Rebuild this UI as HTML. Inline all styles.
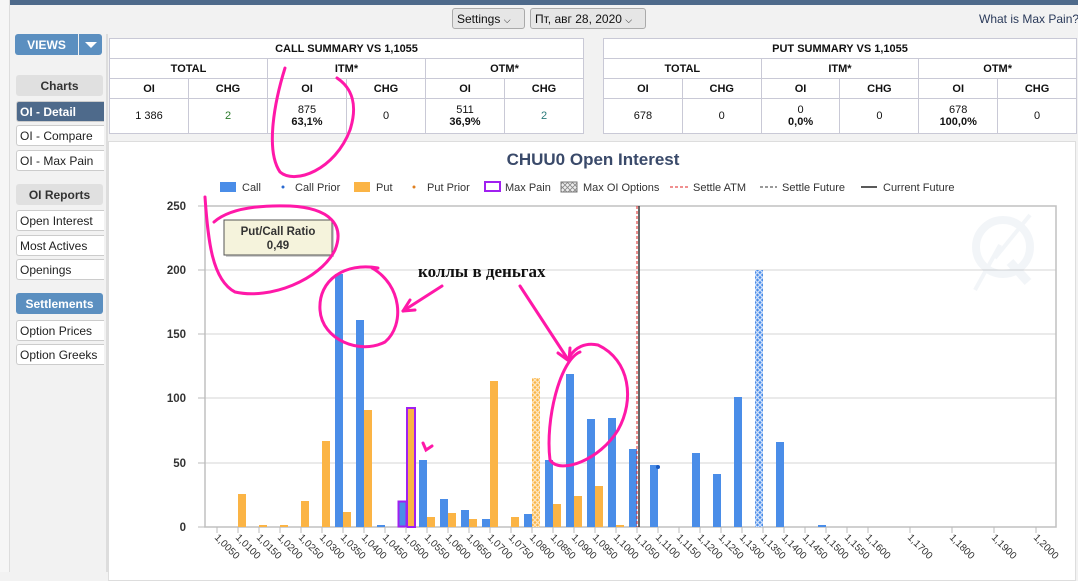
<!DOCTYPE html>
<html><head><meta charset="utf-8"><style>
*{box-sizing:border-box;margin:0;padding:0}
body{width:1078px;height:572px;overflow:hidden;background:#f2f2f2;font-family:"Liberation Sans",sans-serif;position:relative;font-size:12px;color:#111}
.abs{position:absolute;white-space:nowrap}
.btn{position:absolute;white-space:nowrap;border:1px solid #aaa;border-radius:3px;background:#e6e6e6;font-size:12px;padding:3px 4px;height:21px}
table{border-collapse:collapse;background:#fff;position:absolute;table-layout:fixed}
td{border:1px solid #c9c9d6;text-align:center;font-size:11px;height:20px;padding:0}
.h td,td.h{font-weight:bold}
.side{position:absolute;left:16px;width:88px;height:21px;border:1px solid #ccc;border-right:none;border-radius:3px 0 0 3px;background:#fff;font-size:12px;padding:3px 0 0 3px;color:#222;white-space:nowrap}
.hd{position:absolute;left:16px;width:87px;height:21px;border-radius:3px;background:#e0e0e0;font-weight:bold;font-size:12px;text-align:center;padding-top:4px;color:#333}
</style></head><body>
<div class="abs" style="left:0;top:0;width:10px;height:572px;background:#f6f6f6;border-right:1px solid #ddd"></div>
<div class="abs" style="left:10px;top:0;width:1068px;height:5px;background:#4e6a8b"></div>
<div class="btn" style="left:452px;top:8px;width:73px">Settings <span style="font-size:9px">&#9013;</span></div>
<div class="btn" style="left:530px;top:8px;width:116px">Пт, авг 28, 2020 <span style="font-size:9px">&#9013;</span></div>
<div class="abs" style="left:979px;top:12px;font-size:12px;color:#2a3a5a">What is Max Pain?</div>

<div class="abs" style="left:15px;top:34px;width:63px;height:21px;background:#5b8fc0;border-radius:3px 0 0 3px;color:#fff;font-weight:bold;font-size:12px;text-align:center;padding-top:4px">VIEWS</div>
<div class="abs" style="left:79px;top:34px;width:23px;height:21px;background:#5b8fc0;border-radius:0 3px 3px 0"><div style="margin:8px auto 0;width:0;height:0;border-left:6px solid transparent;border-right:6px solid transparent;border-top:6px solid #fff"></div></div>
<div class="abs" style="left:106px;top:34px;width:2px;height:538px;background:#ddd"></div>

<div class="hd" style="top:75px">Charts</div>
<div class="side" style="top:101px;background:#4e6a8b;color:#fff;font-weight:bold">OI - Detail</div>
<div class="side" style="top:125px">OI - Compare</div>
<div class="side" style="top:150px">OI - Max Pain</div>
<div class="hd" style="top:184px">OI Reports</div>
<div class="side" style="top:210px">Open Interest</div>
<div class="side" style="top:235px">Most Actives</div>
<div class="side" style="top:259px">Openings</div>
<div class="hd" style="top:293px;background:#5b8fc0;color:#fff">Settlements</div>
<div class="side" style="top:320px">Option Prices</div>
<div class="side" style="top:344px">Option Greeks</div>

<table style="left:109px;top:38px;width:475px">
<tr class="h"><td colspan="6">CALL SUMMARY VS 1,1055</td></tr>
<tr class="h"><td colspan="2">TOTAL</td><td colspan="2">ITM*</td><td colspan="2">OTM*</td></tr>
<tr class="h"><td>OI</td><td>CHG</td><td>OI</td><td>CHG</td><td>OI</td><td>CHG</td></tr>
<tr style="height:35px"><td>1 386</td><td style="color:#2a7a2a">2</td><td>875<br><b>63,1%</b></td><td>0</td><td>511<br><b>36,9%</b></td><td style="color:#2a7a7a">2</td></tr>
</table>
<table style="left:603px;top:38px;width:474px">
<tr class="h"><td colspan="6">PUT SUMMARY VS 1,1055</td></tr>
<tr class="h"><td colspan="2">TOTAL</td><td colspan="2">ITM*</td><td colspan="2">OTM*</td></tr>
<tr class="h"><td>OI</td><td>CHG</td><td>OI</td><td>CHG</td><td>OI</td><td>CHG</td></tr>
<tr style="height:35px"><td>678</td><td>0</td><td>0<br><b>0,0%</b></td><td>0</td><td>678<br><b>100,0%</b></td><td>0</td></tr>
</table>

<div class="abs" style="left:108px;top:141px;width:968px;height:440px;background:#fff;border:1px solid #ddd"></div>

<svg class="abs" style="left:0;top:0" width="1078" height="572" font-family="Liberation Sans, sans-serif">
<defs>
<pattern id="hb" width="5" height="5" patternUnits="userSpaceOnUse"><rect width="5" height="5" fill="#4a8de8"/><path d="M0,0L5,5M5,0L0,5" stroke="#cfe0fa" stroke-width="1.3"/></pattern>
<pattern id="ho" width="5" height="5" patternUnits="userSpaceOnUse"><rect width="5" height="5" fill="#fbb445"/><path d="M0,0L5,5M5,0L0,5" stroke="#fde6c0" stroke-width="1.3"/></pattern>
<pattern id="hg" width="5" height="5" patternUnits="userSpaceOnUse"><rect width="5" height="5" fill="#eee"/><path d="M0,0L5,5M5,0L0,5" stroke="#888" stroke-width="0.8"/></pattern>
</defs>
<text x="593" y="165" text-anchor="middle" font-size="17" font-weight="bold" fill="#3a4a6a">CHUU0 Open Interest</text>
<g font-size="11" fill="#333">
<rect x="220" y="182" width="16" height="10" fill="#4a8de8"/><text x="242" y="191">Call</text>
<circle cx="283" cy="187" r="1.5" fill="#2a6ad0"/><text x="295" y="191">Call Prior</text>
<rect x="354" y="182" width="16" height="10" fill="#fbb445"/><text x="376" y="191">Put</text>
<circle cx="414" cy="187" r="1.5" fill="#e08020"/><text x="427" y="191">Put Prior</text>
<rect x="485" y="182" width="15" height="9" fill="none" stroke="#a020f0" stroke-width="2"/><text x="505" y="191">Max Pain</text>
<rect x="561" y="182" width="16" height="10" fill="url(#hg)" stroke="#777"/><text x="583" y="191">Max OI Options</text>
<line x1="670" y1="187" x2="690" y2="187" stroke="#e02020" stroke-dasharray="3,2"/><text x="693" y="191">Settle ATM</text>
<line x1="760" y1="187" x2="777" y2="187" stroke="#333" stroke-dasharray="3,2"/><text x="782" y="191">Settle Future</text>
<line x1="861" y1="187" x2="877" y2="187" stroke="#222" stroke-width="1.5"/><text x="883" y="191">Current Future</text>
</g>
<g stroke="#e4e4e4" stroke-width="1.5"><line x1="205" y1="270" x2="1056" y2="270"/><line x1="205" y1="334" x2="1056" y2="334"/><line x1="205" y1="398" x2="1056" y2="398"/><line x1="205" y1="463" x2="1056" y2="463"/></g>
<rect x="205" y="206" width="851" height="321" fill="none" stroke="#c0c0c0" stroke-width="1.5"/>
<line x1="198" y1="206" x2="205" y2="206" stroke="#bbb"/><line x1="198" y1="270" x2="205" y2="270" stroke="#bbb"/><line x1="198" y1="334" x2="205" y2="334" stroke="#bbb"/><line x1="198" y1="398" x2="205" y2="398" stroke="#bbb"/><line x1="198" y1="463" x2="205" y2="463" stroke="#bbb"/><line x1="198" y1="527" x2="205" y2="527" stroke="#bbb"/>
<g font-size="11.5" font-weight="bold" fill="#333" text-anchor="end"><text x="186" y="210">250</text><text x="186" y="274">200</text><text x="186" y="338">150</text><text x="186" y="402">100</text><text x="186" y="467">50</text><text x="186" y="531">0</text></g>
<g opacity="0.08" stroke="#6a8ab0" fill="none"><circle cx="1003" cy="247" r="27" stroke-width="8"/><line x1="1010" y1="262" x2="1028" y2="282" stroke-width="9"/><path d="M975,290 L1000,245 L995,258 L1030,215" stroke-width="4"/></g>
<g fill="#4a8de8">
<rect x="335" y="274" width="8" height="253"/><rect x="356" y="320" width="8" height="207"/><rect x="377" y="525" width="8" height="2"/>
<rect x="398" y="501" width="8" height="26"/><rect x="419" y="460" width="8" height="67"/><rect x="440" y="499" width="8" height="28"/>
<rect x="461" y="510" width="8" height="17"/><rect x="482" y="519" width="8" height="8"/><rect x="524" y="514" width="8" height="13"/>
<rect x="545" y="460" width="8" height="67"/><rect x="566" y="374" width="8" height="153"/><rect x="587" y="419" width="8" height="108"/>
<rect x="608" y="418" width="8" height="109"/><rect x="629" y="449" width="8" height="78"/><rect x="650" y="465" width="8" height="62"/>
<rect x="692" y="453" width="8" height="74"/><rect x="713" y="474" width="8" height="53"/><rect x="734" y="397" width="8" height="130"/>
<rect x="776" y="442" width="8" height="85"/><rect x="818" y="525" width="8" height="2"/>
</g>
<rect x="755" y="270" width="8" height="257" fill="url(#hb)"/>
<g fill="#fbb445">
<rect x="238" y="494" width="8" height="33"/><rect x="259" y="525" width="8" height="2"/><rect x="280" y="525" width="8" height="2"/>
<rect x="301" y="501" width="8" height="26"/><rect x="322" y="441" width="8" height="86"/><rect x="343" y="512" width="8" height="15"/>
<rect x="364" y="410" width="8" height="117"/><rect x="407" y="408" width="8" height="119"/><rect x="427" y="517" width="8" height="10"/>
<rect x="448" y="513" width="8" height="14"/><rect x="469" y="519" width="8" height="8"/><rect x="490" y="381" width="8" height="146"/>
<rect x="511" y="517" width="8" height="10"/><rect x="553" y="504" width="8" height="23"/><rect x="574" y="496" width="8" height="31"/>
<rect x="595" y="486" width="8" height="41"/><rect x="616" y="525" width="8" height="2"/>
</g>
<rect x="532" y="378" width="8" height="149" fill="url(#ho)"/>
<rect x="398.5" y="501.5" width="8" height="25" fill="none" stroke="#a020f0" stroke-width="2"/>
<rect x="407" y="408" width="8" height="119" fill="none" stroke="#a020f0" stroke-width="2"/>
<circle cx="658" cy="467" r="2" fill="#1a5ac0"/>
<line x1="637" y1="206" x2="637" y2="527" stroke="#e02020" stroke-dasharray="3,2"/>
<line x1="639" y1="206" x2="639" y2="527" stroke="#333" stroke-width="1.5"/>
<g stroke="#bbb"><line x1="217" y1="527" x2="217" y2="533"/><line x1="238" y1="527" x2="238" y2="533"/><line x1="259" y1="527" x2="259" y2="533"/><line x1="280" y1="527" x2="280" y2="533"/><line x1="301" y1="527" x2="301" y2="533"/><line x1="322" y1="527" x2="322" y2="533"/><line x1="343" y1="527" x2="343" y2="533"/><line x1="364" y1="527" x2="364" y2="533"/><line x1="385" y1="527" x2="385" y2="533"/><line x1="406" y1="527" x2="406" y2="533"/><line x1="427" y1="527" x2="427" y2="533"/><line x1="448" y1="527" x2="448" y2="533"/><line x1="469" y1="527" x2="469" y2="533"/><line x1="490" y1="527" x2="490" y2="533"/><line x1="511" y1="527" x2="511" y2="533"/><line x1="532" y1="527" x2="532" y2="533"/><line x1="553" y1="527" x2="553" y2="533"/><line x1="574" y1="527" x2="574" y2="533"/><line x1="595" y1="527" x2="595" y2="533"/><line x1="616" y1="527" x2="616" y2="533"/><line x1="637" y1="527" x2="637" y2="533"/><line x1="658" y1="527" x2="658" y2="533"/><line x1="679" y1="527" x2="679" y2="533"/><line x1="700" y1="527" x2="700" y2="533"/><line x1="721" y1="527" x2="721" y2="533"/><line x1="742" y1="527" x2="742" y2="533"/><line x1="763" y1="527" x2="763" y2="533"/><line x1="784" y1="527" x2="784" y2="533"/><line x1="805" y1="527" x2="805" y2="533"/><line x1="826" y1="527" x2="826" y2="533"/><line x1="847" y1="527" x2="847" y2="533"/><line x1="868" y1="527" x2="868" y2="533"/><line x1="910" y1="527" x2="910" y2="533"/><line x1="952" y1="527" x2="952" y2="533"/><line x1="994" y1="527" x2="994" y2="533"/><line x1="1036" y1="527" x2="1036" y2="533"/></g>
<g font-size="10" fill="#333">
<text transform="translate(214,538) rotate(45)">1,0050</text><text transform="translate(235,538) rotate(45)">1,0100</text><text transform="translate(256,538) rotate(45)">1,0150</text><text transform="translate(277,538) rotate(45)">1,0200</text><text transform="translate(298,538) rotate(45)">1,0250</text><text transform="translate(319,538) rotate(45)">1,0300</text><text transform="translate(340,538) rotate(45)">1,0350</text><text transform="translate(361,538) rotate(45)">1,0400</text><text transform="translate(382,538) rotate(45)">1,0450</text><text transform="translate(403,538) rotate(45)">1,0500</text><text transform="translate(424,538) rotate(45)">1,0550</text><text transform="translate(445,538) rotate(45)">1,0600</text><text transform="translate(466,538) rotate(45)">1,0650</text><text transform="translate(487,538) rotate(45)">1,0700</text><text transform="translate(508,538) rotate(45)">1,0750</text><text transform="translate(529,538) rotate(45)">1,0800</text><text transform="translate(550,538) rotate(45)">1,0850</text><text transform="translate(571,538) rotate(45)">1,0900</text><text transform="translate(592,538) rotate(45)">1,0950</text><text transform="translate(613,538) rotate(45)">1,1000</text><text transform="translate(634,538) rotate(45)">1,1050</text><text transform="translate(655,538) rotate(45)">1,1100</text><text transform="translate(676,538) rotate(45)">1,1150</text><text transform="translate(697,538) rotate(45)">1,1200</text><text transform="translate(718,538) rotate(45)">1,1250</text><text transform="translate(739,538) rotate(45)">1,1300</text><text transform="translate(760,538) rotate(45)">1,1350</text><text transform="translate(781,538) rotate(45)">1,1400</text><text transform="translate(802,538) rotate(45)">1,1450</text><text transform="translate(823,538) rotate(45)">1,1500</text><text transform="translate(844,538) rotate(45)">1,1550</text><text transform="translate(865,538) rotate(45)">1,1600</text><text transform="translate(907,538) rotate(45)">1,1700</text><text transform="translate(949,538) rotate(45)">1,1800</text><text transform="translate(991,538) rotate(45)">1,1900</text><text transform="translate(1033,538) rotate(45)">1,2000</text>
</g>
<rect x="226" y="222" width="108" height="35" fill="#888" opacity="0.4"/>
<rect x="224" y="220" width="108" height="35" fill="#f5f3dc" stroke="#555"/>
<text x="278" y="235" text-anchor="middle" font-size="11.5" font-weight="bold" fill="#333">Put/Call Ratio</text>
<text x="278" y="249" text-anchor="middle" font-size="11.5" font-weight="bold" fill="#333">0,49</text>
<text x="418" y="277" font-family="Liberation Serif, serif" font-size="17" font-weight="bold" fill="#111">коллы в деньгах</text>
<g stroke="#ff18a8" stroke-width="3" fill="none" stroke-linecap="round">
<path d="M285,68 C275,100 265,150 280,172 C295,185 335,170 350,130 C358,105 352,88 337,78"/>
<path d="M205,197 C208,240 212,280 235,292 C270,300 320,280 335,250 C345,225 330,208 290,206 C260,205 230,208 214,222"/>
<path d="M378,268 C345,262 318,280 320,310 C322,340 360,355 385,342 C405,325 402,285 372,268"/>
<path d="M442,286 L403,311"/><path d="M403,311 L410,300 M403,311 L415,310"/>
<path d="M520,286 L569,361"/><path d="M569,361 L558,353 M569,361 L570,348"/>
<path d="M580,352 C560,360 545,420 550,460 C560,475 600,460 618,430 C635,400 630,360 598,345 C585,342 575,348 570,356"/>
<path d="M423,443 L426,450 L432,446"/>
</g>
</svg>
</body></html>
